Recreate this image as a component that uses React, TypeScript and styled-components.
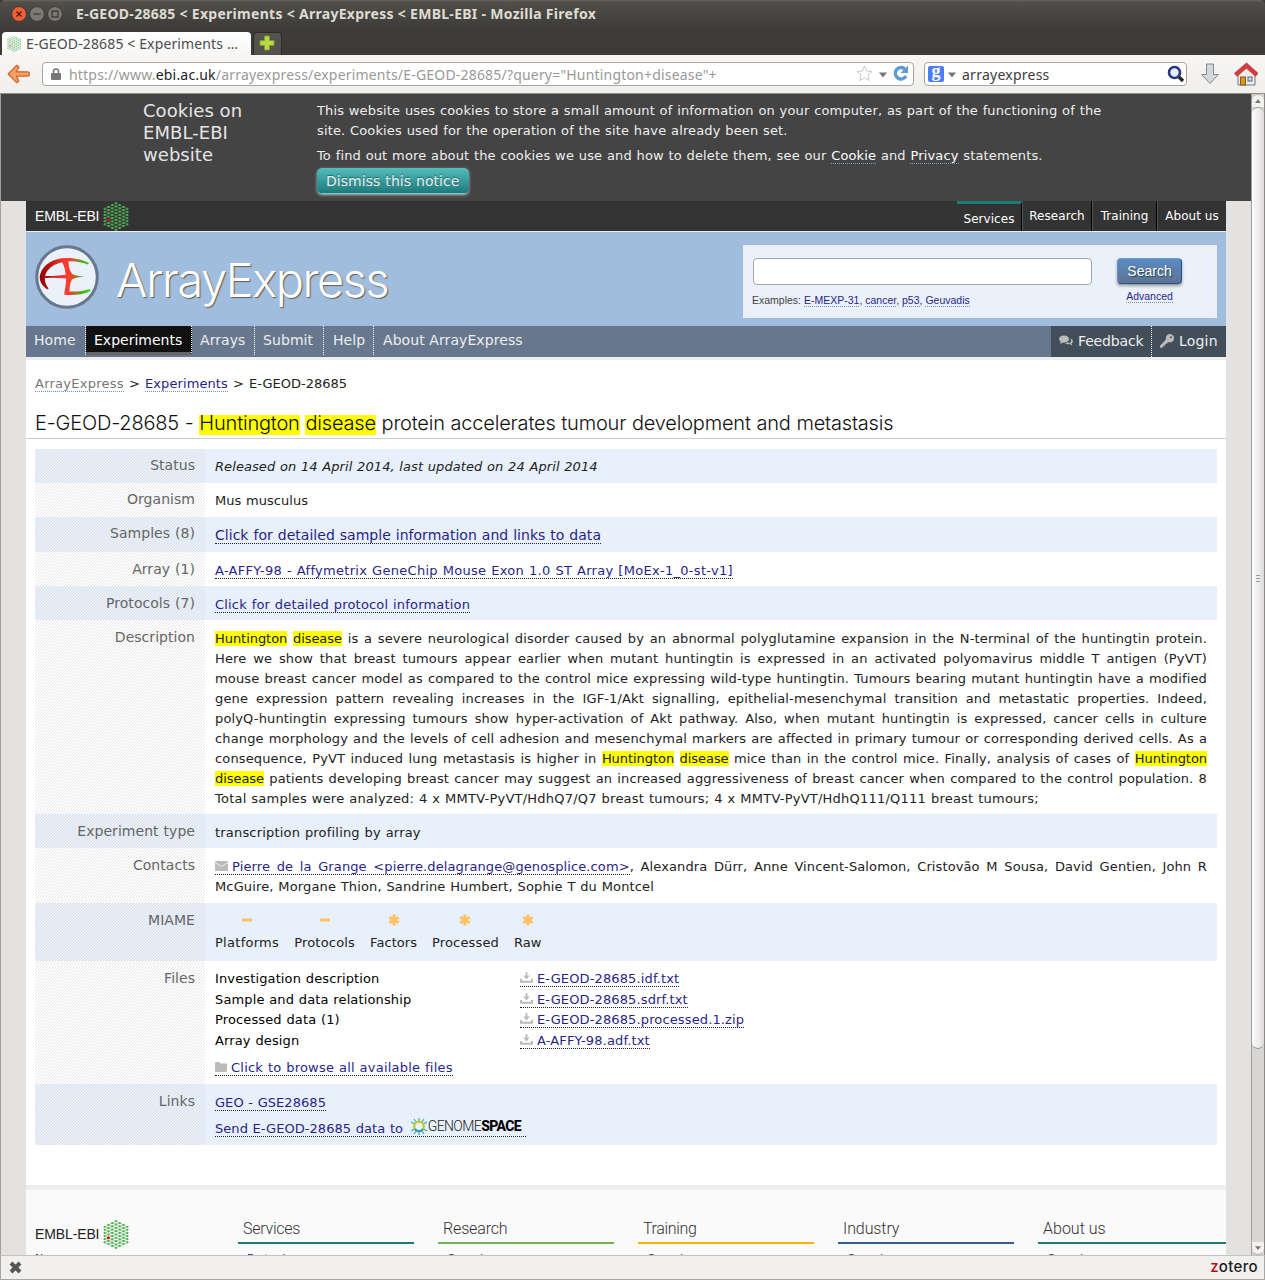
import React from "react";
import styled, { createGlobalStyle } from "styled-components";

const sans = '"DejaVu Sans", sans-serif';
const chrome = '"Noto Sans", "Open Sans", sans-serif';
const helv = '"Liberation Sans", Arial, sans-serif';
const light = 'Inter, Roboto, sans-serif';

const Global = createGlobalStyle`
  * { box-sizing: border-box; }
  body { margin: 0; overflow: hidden; font-family: ${sans}; color: #222; background: #3c3b37; }
  svg { display: block; flex: none; }
`;

const T = styled.span<{ $ls?: number }>`
  letter-spacing: ${(p) => p.$ls ?? 0}px;
  white-space: nowrap;
`;

/* window chrome */
const Window = styled.div`
  width: 1265px; height: 1280px; overflow: hidden;
  display: flex; flex-direction: column;
  background: #3c3b37;
`;
const TitleBar = styled.div`
  height: 30px; flex: none; display: flex; align-items: center;
  padding: 0 0 2px 11px; gap: 2px;
  background: linear-gradient(#66655f 0, #504f4a 2px, #3e3d39 26px);
  border-radius: 5px 5px 0 0;
`;
const WindowTitle = styled.div`
  margin-left: 11px; font: bold 14px/20px ${chrome}; color: #dfdbd2;
`;
const TabStrip = styled.div`
  height: 25px; flex: none; display: flex; align-items: flex-end; padding-left: 2px; gap: 2px;
`;
const Tab = styled.div`
  width: 249px; height: 23px; border-radius: 4px 4px 0 0; background: linear-gradient(#fff, #f7f6f5);
  display: flex; align-items: center; gap: 4px; padding-left: 5px;
  font: 14px/22px ${chrome}; color: #4c4c4c;
`;
const NewTab = styled.div`
  width: 29px; height: 23px; border-radius: 4px 4px 0 0; border: 1px solid #2d2c29; border-bottom: 0;
  background: #53524d; display: flex; align-items: center; padding: 0 0 2px 5px;
`;
const Toolbar = styled.div`
  height: 39px; flex: none; display: flex; align-items: center; padding: 0 6px 1px 7px;
  background: linear-gradient(#f7f6f5, #f0efed); border-bottom: 1px solid #908e88;
  font: 14px/20px ${chrome};
`;
const Field = styled.div<{ $w: number; $ml: number }>`
  width: ${(p) => p.$w}px; height: 24px; flex: none; margin-left: ${(p) => p.$ml}px;
  border: 1px solid #a9a69f; border-radius: 4px; background: #fff; display: flex; align-items: center;
`;
const Url = styled.div`
  flex: 1; margin-left: 8px; padding-top: 2px; color: #999; b { font-weight: 400; color: #222; }
`;
const Query = styled.div`flex: 1; margin-left: 6px; padding-top: 2px; color: #3c3c3c;`;
const Google = styled.div`
  width: 16px; height: 16px; margin: 0 4px 0 3px; border-radius: 2px; background: #4a7df8; color: #fff;
  font: bold 18px/11px "Liberation Serif", serif; text-align: center;
`;
const StatusBar = styled.div`
  height: 25px; flex: none; border: 1px solid #a9a7a2; border-top-color: #c5c3c0;
  background: #f1f0ee; display: flex; align-items: center; justify-content: space-between; padding: 0 6px 1px 8px;
`;
const Zotero = styled.div`
  font: 500 15px/20px Inter, sans-serif; color: #1c1c1c; b { font-weight: 500; color: #a11; }
`;

/* page viewport */
const Viewport = styled.div`
  flex: 1; min-height: 0; display: flex; border-left: 1px solid #a3a19d; background: #e3e2e0;
`;
const Page = styled.div`width: 1250px; overflow: hidden; display: flex; flex-direction: column;`;
const Scrollbar = styled.div`
  flex: 1; border-right: 1px solid #8c8a86; border-left: 1px solid #a19f9b; background: #d8d5d3;
  display: flex; flex-direction: column;
`;
const Arrow = styled.div<{ $down?: boolean }>`
  height: 13px; flex: none; display: flex; align-items: center; justify-content: center; background: #f2f1f0;
  border-radius: ${(p) => (p.$down ? "0 0 6px 6px" : "6px 6px 0 0")};
  border: 1px solid #b5b2ae; border-width: ${(p) => (p.$down ? "0 0 1px" : "1px 0 0")};
`;
const Thumb = styled.div`
  height: 942px; flex: none; border: 1px solid #9b9894; border-width: 1px 0; border-radius: 6px;
  background: linear-gradient(90deg, #fcfcfc, #eceaea 60%, #dddbd9);
  display: flex; flex-direction: column; justify-content: center; align-items: center; gap: 2px;
`;
const Grip = styled.i`width: 4px; height: 1px; background: #999;`;
const Track = styled.div`flex: 1;`;

const Cookies = styled.div`
  height: 107px; flex: none; background: #444; color: #e5e5e5; display: flex; padding-left: 142px;
`;
const CookieTitle = styled.div`width: 174px; padding-top: 6px; font-size: 18px; line-height: 22px; letter-spacing: 0.05px;`;
const CookieBody = styled.div`
  padding-top: 7px; font-size: 13px; line-height: 20px; color: #eee; letter-spacing: 0.14px; word-spacing: 0.45px;
`;
const Para = styled.div<{ $mt?: number }>`margin-top: ${(p) => p.$mt ?? 0}px; white-space: nowrap;`;
const Dismiss = styled.div`
  width: 152px; height: 26px; margin: 2px 0 0; border-radius: 5px; padding-left: 9px; font-size: 14px; line-height: 26px;
  letter-spacing: 0.04px; word-spacing: 0.5px;
  background: linear-gradient(#54bcbc, #1f7a7a); border-bottom: 1px dotted #a8dada; box-shadow: 0 1px 3px #bbb;
  text-shadow: 0 -1px 1px #1a6a6a;
`;
const A = styled.a<{ $c?: string; $b?: string; $ls?: number }>`
  color: ${(p) => p.$c ?? "#2a1f87"}; border-bottom: 1px dotted ${(p) => p.$b ?? "#222"};
  ${(p) => p.$ls !== undefined && `letter-spacing: ${p.$ls}px;`}
`;
const SampleLink = styled(A)`font-size: 14px;`;

const Site = styled.div`width: 1200px; margin-left: 25px; flex: 1; min-height: 0; display: flex; flex-direction: column; background: #fff;`;
const Masthead = styled.div`
  height: 31px; flex: none; background: #333; border-bottom: 1px solid #eee; display: flex; justify-content: space-between;
`;
const Brand = styled.div<{ $dark?: boolean }>`
  display: flex; align-items: center; gap: 4px; padding-left: 9px; height: 30px;
  font: 14px/30px ${helv}; color: ${(p) => (p.$dark ? "#222" : "#fff")};
`;
const TopMenu = styled.div`display: flex;`;
const TopItem = styled.div<{ $w: number; $on?: boolean }>`
  width: ${(p) => p.$w}px; height: 30px; text-align: center; color: #fff; font-size: 12px; line-height: 30px;
  border-right: 1px solid #000; border-left: 1px solid #555; letter-spacing: 0.05px;
  &:last-child { border-right: 0; }
  ${(p) => p.$on && "border-top: 3px solid #1f7a7a; border-left: 0; padding-top: 0;"}
`;
const Banner = styled.div`
  height: 94px; flex: none; background: #a1bdde; display: flex; padding: 13px 9px 0;
`;
const SiteName = styled.div`
  margin-left: 17px; flex: 1; padding-top: 5px; font: 300 47px/60px ${light}; color: #fff; text-shadow: 1px 1px 1px #665c50;
`;
const SearchBox = styled.div`
  width: 474px; height: 73px; background: #eaf1fa; border: 2px solid #eee; padding: 11px 0 0 8px;
  display: flex; gap: 25px; font-family: ${helv};
`;
const SearchInput = styled.div`width: 339px; height: 27px; background: #fff; border: 1px solid #a8a6a4; border-radius: 4px;`;
const Examples = styled.div`margin: 7px 0 0 -1px; font-size: 10.5px; line-height: 16px; color: #444;`;
const SearchSide = styled.div`display: flex; flex-direction: column; align-items: center;`;
const SearchBtn = styled.div`
  width: 65px; height: 26px; border-radius: 4px; color: #fff; font-size: 14px; line-height: 25px; text-align: center;
  background: linear-gradient(#5b8bc5, #5d7391); border: 1px solid #23508b; border-top-color: #7b9cc4; border-left-color: #6e90b9;
  box-shadow: 0 2px 3px #999; text-shadow: 1px 1px 1px #245;
`;
const Advanced = styled.div`margin-top: 4px; font-size: 10.5px; line-height: 16px;`;

const Nav = styled.div`
  height: 34px; flex: none; background: #67778d; border-bottom: 3px solid #eee; display: flex; color: #eee; font-size: 14px;
`;
const NavItem = styled.div<{ $w: number; $on?: boolean; $pl?: number }>`
  width: ${(p) => p.$w}px; height: 29px; padding-left: ${(p) => p.$pl ?? 8}px; line-height: 28px; border-right: 1px dotted #fff;
  white-space: nowrap; letter-spacing: 0.08px;
  ${(p) => p.$on && "background: #111; color: #fff; border-bottom: 3px solid #666; letter-spacing: 0;"}
`;
const NavLast = styled(NavItem)`border-right: 0;`;
const NavTools = styled.div`margin-left: auto; width: 175px; background: #434e5b; display: flex;`;
const Tool = styled.div<{ $w: number }>`
  width: ${(p) => p.$w}px; height: 31px; display: flex; align-items: center; gap: 5px; padding: 0 0 2px 8px;
  &:first-child { border-right: 1px dotted #fff; }
`;

const Crumbs = styled.div`
  height: 49px; flex: none; padding: 14px 0 0 9px; font-size: 13px; line-height: 20px; white-space: nowrap; word-spacing: 1px;
`;
const Heading = styled.h2`
  height: 30px; flex: none; margin: 0; padding: 3px 0 0 9px; border-bottom: 1px solid #ccc;
  font: 300 20px/22px ${light}; color: #111; white-space: nowrap; word-spacing: 0.3px;
  mark { background: linear-gradient(#ff0, #ff0) 0 100% / 100% 20px no-repeat; }
`;
const Mark = styled.mark`background: #ff0; color: inherit; `;
const BodyMark = styled(Mark)`letter-spacing: -0.05px;`;

const Table = styled.div`
  margin: 10px 9px 40px; flex: none; font-size: 13px; line-height: 20px; letter-spacing: 0.1px; word-spacing: 0.45px;
`;
const Row = styled.div<{ $h: number; $alt?: boolean }>`
  height: ${(p) => p.$h}px; display: flex; background: ${(p) => (p.$alt ? "#e7f0fb" : "#fff")};
`;
const Label = styled.div<{ $pt?: number }>`
  width: 170px; padding: ${(p) => p.$pt ?? 7}px 10px 0 0; text-align: right; font-size: 14px; color: #666; white-space: nowrap;
  letter-spacing: 0.04px;
  background: linear-gradient(135deg, #d8d8d8a0 12.5%, transparent 12.5%, transparent 50%, #d8d8d8a0 50%, #d8d8d8a0 62.5%, transparent 62.5%) 0 0 / 3px 3px;
`;
const Cell = styled.div<{ $pt?: number }>`width: 1012px; padding: ${(p) => p.$pt ?? 9}px 10px 0; white-space: nowrap;`;
const Line = styled.div<{ $last?: boolean; $ls?: number }>`
  height: 20px; white-space: nowrap; text-align-last: ${(p) => (p.$last ? "left" : "justify")};
  ${(p) => p.$ls !== undefined && `letter-spacing: ${p.$ls}px;`}
`;
const Scores = styled.div`display: flex; gap: 15px; padding-top: 1px;`;
const Score = styled.div<{ $ls?: number }>`
  display: flex; flex-direction: column; align-items: center; gap: 7px; line-height: 20px; letter-spacing: ${(p) => p.$ls ?? 0.05}px;
`;
const Files = styled.div`display: grid; grid-template-columns: 305px auto; grid-auto-rows: 20.6px; color: #000; letter-spacing: 0.13px;`;
const Ico = styled.span`display: inline-block; margin-right: 4px; vertical-align: 0;`;
const Browse = styled.div`margin-top: 7px;`;
const LinkLine = styled.div<{ $h: number }>`height: ${(p) => p.$h}px; white-space: nowrap; letter-spacing: 0.05px;`;
const Genome = styled.span`
  display: inline-flex; align-items: center; vertical-align: -2px; height: 17px; margin-left: 2px; padding-right: 5px; color: #222;
  font: 300 14px/17px Roboto, sans-serif; b { font-weight: 800; color: #000; }
`;

const Footer = styled.div`
  flex: 1; min-height: 0; background: #fafafa; border-top: 5px solid #eee; display: flex; overflow: hidden; padding-top: 29px;
`;
const FootBrand = styled.div`width: 212px; flex: none;`;
const FootCol = styled.div<{ $c: string; $w: number }>`
  width: ${(p) => p.$w}px; flex: none; margin-right: 24px;
  h3 { margin: 0; height: 25px; padding-left: 5px; font: 300 16px/20px Roboto, sans-serif; color: #333; border-bottom: 2px solid ${(p) => p.$c}; }
`;
const FootLink = styled.div<{ $x: number; $mt: number }>`
  padding-left: ${(p) => p.$x}px; margin-top: ${(p) => p.$mt}px; font-size: 11px; line-height: 14px; color: #2a1f87;
`;

/* drawings */
function HexLogo({ w = 27, h = 29, faint = false }: { w?: number; h?: number; faint?: boolean }) {
  const dots: React.ReactNode[] = [];
  const links: React.ReactNode[] = [];
  for (let c = -3; c <= 3; c++) {
    const n = 9 - Math.abs(c);
    for (let r = 0; r < n; r++) {
      const x = 13 + c * 3.8;
      const y = 14.5 + (r - (n - 1) / 2) * (3.35 - Math.abs(c) * 0.08);
      const red = c === -2 && r === 4;
      dots.push(<circle key={`${c}.${r}`} cx={x} cy={y} r={red ? 1.5 : 1.1} fill={red ? "#e2001a" : "#4fae53"} />);
      if (c === 3) continue;
      const m = 9 - Math.abs(c + 1);
      const step = 3.35 - Math.abs(c + 1) * 0.08;
      for (let k = 0; k < m; k++) {
        const y2 = 14.5 + (k - (m - 1) / 2) * step;
        if (Math.abs(y2 - y) < 2.6) {
          links.push(<path key={`${c}.${r}.${k}`} d={`M${x} ${y}L${x + 3.8} ${y2}`} stroke="#4fae53" strokeOpacity=".75" strokeWidth=".7" />);
        }
      }
    }
  }
  return <svg width={w} height={h} viewBox="0 0 27 29" opacity={faint ? 0.65 : 1}>{links}{dots}</svg>;
}

function AELogo() {
  return (
    <svg width="64" height="64" viewBox="0 0 64 64">
      <defs>
        <linearGradient id="ae" gradientUnits="userSpaceOnUse" x1="5" x2="55" y1="0" y2="0">
          <stop offset="0" stopColor="#8c0000" /><stop offset=".5" stopColor="#ff3a34" /><stop offset=".62" stopColor="#e8452c" /><stop offset=".8" stopColor="#6a9a20" /><stop offset="1" stopColor="#1fe010" />
        </linearGradient>
      </defs>
      <circle cx="32" cy="32" r="30.3" fill="#eaf1fa" stroke="#67778d" strokeWidth="3" />
      <g fill="url(#ae)">
        <path d="M12.500 44.500C6.500 40.500 3.500 35 5.200 29.500C8 19 19 13.300 31 13C41 12.800 49 15.500 54 18L53 19.500C47 17.500 41 15.800 33 16.200C22 17 12.500 22.500 10.500 29.500C9 34.500 10 39 13.500 43.500Z" />
        <path d="M6 30.800C16 31.500 22 30.800 30 29.800H38L36 34L31 33.500C22 32.800 14 32.500 6 33.500Z" />
        <path d="M26.500 14H33.500C33.500 20 34.300 26 37.500 29.200C42 30.800 46 31.300 49.500 31.600C45 32.200 40 32.800 37 34.500C35 38 34.500 42 34.500 46.500C42 47 49 45.800 54.800 44L55.500 46C48 50 38 50.300 29.300 49.800C29.500 45 31.500 38 31 33C30.500 27 29.500 20 26.500 16.500Z" />
      </g>
    </svg>
  );
}
const WinBtn = ({ kind }: { kind: "x" | "-" | "o" }) => (
  <svg width="16" height="16" viewBox="0 0 16 16">
    <circle cx="8" cy="8" r="7.400" fill={kind === "x" ? "#ee6034" : "#7b7973"} stroke="#33322e" strokeWidth=".8" />
    {kind === "x" && <path d="M5.500 5.500l5 5m0-5l-5 5" stroke="#4b1c0b" strokeWidth="1.300" />}
    {kind === "-" && <path d="M4.500 8h7" stroke="#35342f" strokeWidth="1.200" />}
    {kind === "o" && <rect x="5" y="5" width="6" height="6" fill="none" stroke="#35342f" strokeWidth="1.200" />}
  </svg>
);
const Minus = () => <svg width="10" height="12"><rect y="4.500" width="10" height="3" rx=".6" fill="#ffc166" /></svg>;
const Aster = () => <svg width="12" height="12"><path d="M6 .5v11M1.300 3.200l9.400 5.600M1.300 8.800l9.400-5.600" stroke="#ffc166" strokeWidth="3" /></svg>;
const Mail = () => <svg width="13" height="10"><rect width="13" height="10" rx=".8" fill="#bbb" /><path d="M0 1.500l6.500 4L13 1.500" fill="none" stroke="#eee" strokeWidth="1" /></svg>;
const Save = () => <svg width="13" height="11"><path d="M6.500 0v5" stroke="#bbb" strokeWidth="1.800" /><path d="M3.200 3.500h6.600L6.500 7.500z" fill="#bbb" /><path d="M1 7v2.800h11V7" fill="none" stroke="#bbb" strokeWidth="2" /></svg>;
const Folder = () => <svg width="12" height="10"><path d="M0 1a1 1 0 011-1h3.500l1.200 1.500H11a1 1 0 011 1V9a1 1 0 01-1 1H1a1 1 0 01-1-1z" fill="#bbb" /></svg>;
const Caret = ({ up = false, s = 8 }) => <svg width={s} height="6" viewBox="0 0 8 6"><path d={up ? "M0 5.500h8L4 .5z" : "M0 .5h8L4 5.500z"} fill="#777" /></svg>;
const Back = () => (
  <svg width="24" height="20" viewBox="0 0 24 20">
    <path d="M9.800 1.200L1.200 10l8.600 8.800 2.200-1.700-2.600-4.900H20.500q2 0 2-2.200t-2-2.200H9.400L12 2.900z" fill="#f3a066" stroke="#d4622a" strokeWidth="1.200" strokeLinejoin="round" />
  </svg>
);

const P = styled.span<{ $m: string }>`margin: ${(p) => p.$m};`;

const description: React.ReactNode[] = [
  <><BodyMark>Huntington</BodyMark> <BodyMark>disease</BodyMark> is a severe neurological disorder caused by an abnormal polyglutamine expansion in the N-terminal of the huntingtin protein.</>,
  "Here we show that breast tumours appear earlier when mutant huntingtin is expressed in an activated polyomavirus middle T antigen (PyVT)",
  "mouse breast cancer model as compared to the control mice expressing wild-type huntingtin. Tumours bearing mutant huntingtin have a modified",
  "gene expression pattern revealing increases in the IGF-1/Akt signalling, epithelial-mesenchymal transition and metastatic properties. Indeed,",
  "polyQ-huntingtin expressing tumours show hyper-activation of Akt pathway. Also, when mutant huntingtin is expressed, cancer cells in culture",
  "change morphology and the levels of cell adhesion and mesenchymal markers are affected in primary tumour or corresponding derived cells. As a",
  <>consequence, PyVT induced lung metastasis is higher in <BodyMark>Huntington</BodyMark> <BodyMark>disease</BodyMark> mice than in the control mice. Finally, analysis of cases of <BodyMark>Huntington</BodyMark></>,
  <><BodyMark>disease</BodyMark> patients developing breast cancer may suggest an increased aggressiveness of breast cancer when compared to the control population. 8</>,
  "Total samples were analyzed: 4 x MMTV-PyVT/HdhQ7/Q7 breast tumours; 4 x MMTV-PyVT/HdhQ111/Q111 breast tumours;",
];
const files = [
  ["Investigation description", "E-GEOD-28685.idf.txt"],
  ["Sample and data relationship", "E-GEOD-28685.sdrf.txt"],
  ["Processed data (1)", "E-GEOD-28685.processed.1.zip"],
  ["Array design", "A-AFFY-98.adf.txt"],
];
const footer: [string, string, number, string, number][] = [
  ["Services", "#1f7a7a", 176, "By topic", -0.25],
  ["Research", "#70b357", 176, "Overview", -0.15],
  ["Training", "#f5b400", 176, "Overview", -0.35],
  ["Industry", "#33608f", 176, "Overview", -0.1],
  ["About us", "#1f7a7a", 188, "Overview", 0],
];

export default function App() {
  return (
    <Window>
      <Global />
      <TitleBar>
        <WinBtn kind="x" /><WinBtn kind="-" /><WinBtn kind="o" />
        <WindowTitle><T $ls={0.29}>E-GEOD-28685 &lt; Experiments &lt; ArrayExpress &lt; EMBL-EBI - Mozilla Firefox</T></WindowTitle>
      </TitleBar>
      <TabStrip>
        <Tab><HexLogo w={15} h={16} faint /><T $ls={0.13}>E-GEOD-28685 &lt; Experiments …</T></Tab>
        <NewTab><svg width="16" height="16"><path d="M5.500 1h5v4.500H15v5h-4.500V15h-5v-4.500H1v-5h4.500z" fill="#b7d94a" stroke="#7d9c22" /></svg></NewTab>
      </TabStrip>
      <Toolbar>
        <Back />
        <Field $w={872} $ml={11}>
          <P $m="0 0 0 8px"><svg width="10" height="12"><path d="M2.500 6V3.500a2.500 2.500 0 015 0V6" fill="none" stroke="#777" strokeWidth="1.600" /><rect y="5" width="10" height="7" rx="1" fill="#777" /></svg></P>
          <Url><T $ls={0.19}>https://www.<b>ebi.ac.uk</b>/arrayexpress/experiments/E-GEOD-28685/?query="Huntington+disease"+</T></Url>
          <svg width="17" height="17" viewBox="0 0 17 17"><path d="M8.500 1l2.200 5 5.300.5-4 3.600 1.200 5.400-4.700-2.800-4.700 2.800L5 10.100 1 6.500 6.300 6z" fill="#fff" stroke="#c8c8c8" /></svg>
          <P $m="2px 5px 0 6px"><Caret /></P>
          <svg width="17" height="17" viewBox="0 0 17 17"><path d="M13 4.200A5.700 5.700 0 1 0 14 11" fill="none" stroke="#5f9bd0" strokeWidth="3.400" /><path d="M8.500 8h7.500V.5z" fill="#5f9bd0" /></svg>
          <P $m="0 4px 0 0" />
        </Field>
        <Field $w={263} $ml={10}>
          <Google>g</Google><P $m="2px 0 0"><Caret /></P>
          <Query><T $ls={0.25}>arrayexpress</T></Query>
          <P $m="0 1px 0 0"><svg width="18" height="18" viewBox="0 0 18 18"><circle cx="7.500" cy="7.500" r="5.500" fill="#e8effa" stroke="#243584" strokeWidth="2.600" /><path d="M12 12l4 4" stroke="#222" strokeWidth="3.200" /></svg></P>
        </Field>
        <P $m="0 0 0 13px"><svg width="20" height="22" viewBox="0 0 20 22"><path d="M6.500 1h7v10.500h5L10 20.500 1.500 11.500h5z" fill="#d3d8da" stroke="#858b8e" /></svg></P>
        <P $m="0 0 0 14px"><svg width="24" height="24" viewBox="0 0 24 24"><path d="M4 11v12h17V11l-8.500-7z" fill="#eee" stroke="#777" /><rect x="6.500" y="15" width="5" height="8" fill="#d8961e" stroke="#8e5b0c" /><rect x="14" y="15" width="4" height="4" fill="#cde" stroke="#567" /><path d="M1.500 13L12.500 3.500 23 13" fill="none" stroke="#cf3f41" strokeWidth="4.600" /></svg></P>
      </Toolbar>

      <Viewport>
        <Page>
          <Cookies>
            <CookieTitle>Cookies on<br />EMBL-EBI<br />website</CookieTitle>
            <CookieBody>
              <Para>This website uses cookies to store a small amount of information on your computer, as part of the functioning of the</Para>
              <Para>site. Cookies used for the operation of the site have already been set.</Para>
              <Para $mt={5}>To find out more about the cookies we use and how to delete them, see our <A $c="#fff" $b="#6f9fd0">Cookie</A> and <A $c="#fff" $b="#6f9fd0">Privacy</A> statements.</Para>
              <Dismiss>Dismiss this notice</Dismiss>
            </CookieBody>
          </Cookies>
          <Site>
            <Masthead>
              <Brand><T $ls={-0.12}>EMBL-EBI</T><HexLogo /></Brand>
              <TopMenu>
                <TopItem $w={65} $on>Services</TopItem>
                <TopItem $w={70}>Research</TopItem>
                <TopItem $w={65}>Training</TopItem>
                <TopItem $w={69}>About us</TopItem>
              </TopMenu>
            </Masthead>
            <Banner>
              <AELogo />
              <SiteName><T $ls={-1.5}>ArrayExpress</T></SiteName>
              <SearchBox>
                <div>
                  <SearchInput />
                  <Examples>Examples: <A $b="#6f93c9">E-MEXP-31</A>, <A $b="#6f93c9">cancer</A>, <A $b="#6f93c9">p53</A>, <A $b="#6f93c9">Geuvadis</A></Examples>
                </div>
                <SearchSide>
                  <SearchBtn>Search</SearchBtn>
                  <Advanced><A $b="#6f93c9">Advanced</A></Advanced>
                </SearchSide>
              </SearchBox>
            </Banner>
            <Nav>
              <NavItem $w={60}>Home</NavItem>
              <NavItem $w={106} $on>Experiments</NavItem>
              <NavItem $w={63}>Arrays</NavItem>
              <NavItem $w={69}>Submit</NavItem>
              <NavItem $w={50} $pl={9}>Help</NavItem>
              <NavLast $w={158} $pl={9}>About ArrayExpress</NavLast>
              <NavTools>
                <Tool $w={101}>
                  <svg width="14" height="11" viewBox="0 0 14 11"><ellipse cx="5" cy="4" rx="5" ry="3.600" fill="#bbb" /><path d="M2 6l-1 3 4-2zM9.500 8.500c2-.5 3.500-2 2-5 3 1 3 4 1 5l.8 2L10.500 9C8 9.500 6.500 9 6 8.300q2 0 4-1.800z" fill="#bbb" /></svg>
                  <T $ls={-0.15}>Feedback</T>
                </Tool>
                <Tool $w={74}>
                  <svg width="14" height="14" viewBox="0 0 14 14"><path d="M9.800 0a4.200 4.200 0 11-1.400 8.100L6.500 9.800 5.300 10 5 11.500 3.600 11.800 2.500 13.500 0 14 .2 11.500 6 5.500A4.200 4.200 0 019.800 0z" fill="#bbb" /><circle cx="11" cy="3.200" r="1" fill="#434e5b" /></svg>
                  <T $ls={0.2}>Login</T>
                </Tool>
              </NavTools>
            </Nav>

            <Crumbs>
              <A $c="#777" $b="#6f93c9" $ls={0.25}>ArrayExpress</A> &gt; <A $b="#6f93c9" $ls={0.1}>Experiments</A> &gt; E-GEOD-28685
            </Crumbs>
            <Heading><T $ls={-0.19}>E-GEOD-28685 - <Mark>Huntington</Mark> <Mark>disease</Mark> protein accelerates tumour development and metastasis</T></Heading>

            <Table>
              <Row $h={34} $alt><Label $pt={6}>Status</Label><Cell $pt={8}><T $ls={0.08}><i>Released on 14 April 2014, last updated on 24 April 2014</i></T></Cell></Row>
              <Row $h={34}><Label $pt={6}>Organism</Label><Cell $pt={8}><T $ls={0.04}>Mus musculus</T></Cell></Row>
              <Row $h={35} $alt><Label $pt={6}>Samples (8)</Label><Cell $pt={8}><SampleLink $ls={0.03}>Click for detailed sample information and links to data</SampleLink></Cell></Row>
              <Row $h={34}><Label>Array (1)</Label><Cell><A $ls={0.29}>A-AFFY-98 - Affymetrix GeneChip Mouse Exon 1.0 ST Array [MoEx-1_0-st-v1]</A></Cell></Row>
              <Row $h={34} $alt><Label>Protocols (7)</Label><Cell><A $ls={0.18}>Click for detailed protocol information</A></Cell></Row>
              <Row $h={194}><Label>Description</Label><Cell>{description.map((d, i) => <Line key={i} $last={i === 8} $ls={i === 8 ? 0.23 : 0.14}>{d}</Line>)}</Cell></Row>
              <Row $h={34} $alt><Label>Experiment type</Label><Cell><T $ls={0.19}>transcription profiling by array</T></Cell></Row>
              <Row $h={55}><Label>Contacts</Label><Cell>
                <Line $ls={0.11}><A><Ico><Mail /></Ico>Pierre de la Grange &lt;pierre.delagrange@genosplice.com&gt;</A>, Alexandra Dürr, Anne Vincent-Salomon, Cristovão M Sousa, David Gentien, John R</Line>
                <Line $last $ls={0.14}>McGuire, Morgane Thion, Sandrine Humbert, Sophie T du Montcel</Line>
              </Cell></Row>
              <Row $h={58} $alt><Label>MIAME</Label><Cell $pt={10}>
                <Scores>
                  <Score $ls={0.28}><Minus />Platforms</Score><Score $ls={0.2}><Minus />Protocols</Score><Score><Aster />Factors</Score><Score $ls={0.15}><Aster />Processed</Score><Score><Aster />Raw</Score>
                </Scores>
              </Cell></Row>
              <Row $h={123}><Label>Files</Label><Cell $pt={8}>
                <Files>{files.map(([a, b]) => <React.Fragment key={b}><span>{a}</span><span><A><Ico><Save /></Ico>{b}</A></span></React.Fragment>)}</Files>
                <Browse><A $ls={0.22}><Ico><Folder /></Ico>Click to browse all available files</A></Browse>
              </Cell></Row>
              <Row $h={61} $alt><Label>Links</Label><Cell>
                <LinkLine $h={25}><A>GEO - GSE28685</A></LinkLine>
                <LinkLine $h={26}><A>Send E-GEOD-28685 data to <Genome>
                  <svg width="18" height="17" viewBox="0 0 18 17"><g fill="none"><path d="M9 0v17M1 4l16 9M1 13L17 4M4 1l10 15M14 1L4 16" stroke="#3ba0d8" strokeWidth="1.100" /><circle cx="9" cy="8.500" r="4.800" fill="#eaf4fb" stroke="#b4cf2d" strokeWidth="2.200" /><path d="M5 11a4.800 4.800 0 008 0" stroke="#2f93cf" strokeWidth="2" /></g></svg>
                  <T $ls={-0.6}>GENOME<b>SPACE</b></T></Genome></A></LinkLine>
              </Cell></Row>
            </Table>

            <Footer>
              <FootBrand><Brand $dark><T $ls={-0.12}>EMBL-EBI</T><HexLogo /></Brand><FootLink $x={9} $mt={3}>News</FootLink></FootBrand>
              {footer.map(([t, c, w, l, ls]) => (
                <FootCol key={t} $c={c} $w={w}><h3><T $ls={ls}>{t}</T></h3><FootLink $x={9} $mt={8}>{l}</FootLink></FootCol>
              ))}
            </Footer>
          </Site>
        </Page>
        <Scrollbar>
          <Arrow><Caret up s={6} /></Arrow>
          <Thumb><Grip /><Grip /><Grip /></Thumb>
          <Track />
          <Arrow $down><Caret s={6} /></Arrow>
        </Scrollbar>
      </Viewport>

      <StatusBar>
        <svg width="13" height="13" viewBox="0 0 13 13"><path d="M2 2l9 9M11 2l-9 9" stroke="#555" strokeWidth="4" /></svg>
        <Zotero><T $ls={0.35}><b>z</b>otero</T></Zotero>
      </StatusBar>
    </Window>
  );
}
